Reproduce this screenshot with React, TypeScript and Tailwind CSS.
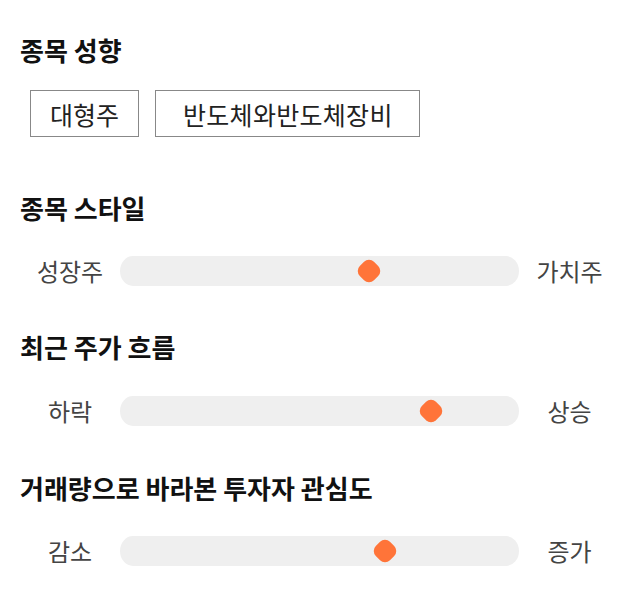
import React from "react";

const font = { fontFamily: '"Noto Sans CJK KR", "Noto Sans", sans-serif' };

function Slider({ left, right, pct }: { left: string; right: string; pct: number }) {
  return (
    <div className="flex items-center h-[30px]">
      <div className="w-[100px] text-center text-[24px] text-[#444] leading-none">{left}</div>
      <div className="relative flex-1 h-[30px] bg-[#efefef] rounded-[13px/15px]">
        <div
          className="absolute top-1/2 w-[20px] h-[20px] -translate-x-1/2 -translate-y-1/2 rotate-45 rounded-[7px] bg-[#ff7439]"
          style={{ left: `${pct}%` }}
        />
      </div>
      <div className="w-[101px] text-center text-[24px] text-[#444] leading-none">{right}</div>
    </div>
  );
}

function Heading({ children }: { children: React.ReactNode }) {
  return <h2 className="text-[26px] font-bold text-[#111] leading-none">{children}</h2>;
}

export default function App() {
  return (
    <div style={font} className="w-[640px] h-[606px] bg-white px-[20px] pt-[37px]">
      <Heading>종목 성향</Heading>
      <div className="flex gap-[16px] mt-[27px] ml-[10px]">
        <div className="h-[47px] px-[19px] pt-[3px] border border-[#888] flex items-center text-[25px] text-[#222]">대형주</div>
        <div className="h-[47px] pl-[27px] pr-[26px] pt-[3px] border border-[#888] flex items-center text-[25px] text-[#222] tracking-[0.3px]">반도체와반도체장비</div>
      </div>
      <div className="mt-[58px]">
        <Heading>종목 스타일</Heading>
      </div>
      <div className="mt-[35px]">
        <Slider left="성장주" right="가치주" pct={62.4} />
      </div>
      <div className="mt-[48px]">
        <Heading>최근 주가 흐름</Heading>
      </div>
      <div className="mt-[36px]">
        <Slider left="하락" right="상승" pct={78} />
      </div>
      <div className="mt-[49px]">
        <Heading>거래량으로 바라본 투자자 관심도</Heading>
      </div>
      <div className="mt-[35px]">
        <Slider left="감소" right="증가" pct={66.4} />
      </div>
    </div>
  );
}
